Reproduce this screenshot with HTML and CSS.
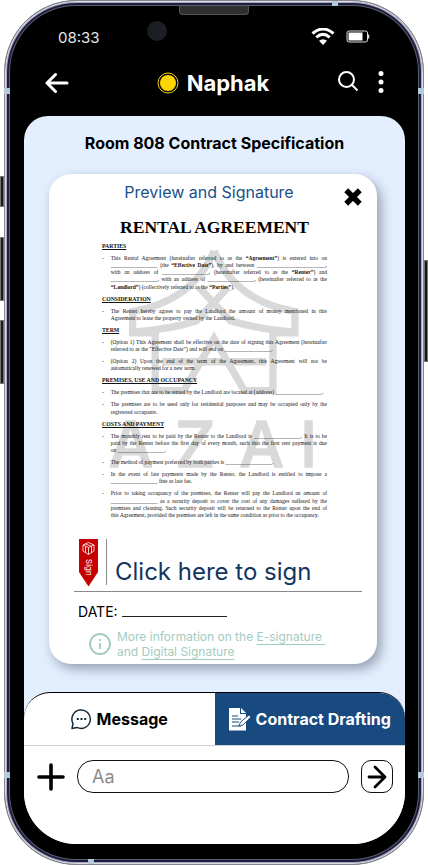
FILE: index.html
```html
<!DOCTYPE html>
<html lang="en">
<head>
<meta charset="utf-8">
<meta name="viewport" content="width=device-width, initial-scale=1">
<title>Naphak – Contract</title>
<link rel="stylesheet" href="styles.css">
</head>
<body>
<div class="phone">
  <i class="side side-mute"></i><i class="side side-up"></i><i class="side side-down"></i><i class="side side-power"></i>
  <i class="band band-left"></i><i class="band band-right"></i><i class="band band-left band-low"></i><i class="band band-right band-low"></i>
  <i class="band-h band-top"></i><i class="band-h band-bottom"></i>
  <i class="speaker"></i><i class="camera"></i>
  <div class="status">
    <span class="time">08:33</span>
    <svg class="wifi" width="24" height="18" viewBox="0 0 24 18" fill="none" stroke="#fff" stroke-width="3"><path d="M1.5 5.500Q12-3.500 22.500 5.500M5.300 9.300Q12 3.500 18.700 9.300"/><path d="M8 12.800Q12 9.800 16 12.800L12 17Z" fill="#fff" stroke="none"/></svg>
    <svg width="24" height="14" viewBox="0 0 24 14"><rect x="1" y="1" width="20.500" height="11" rx="2" fill="none" stroke="#ddd"/><rect x="2.500" y="2.500" width="14" height="8" fill="#fff"/><path d="M22.500 4.500v4" stroke="#ddd" stroke-width="1.500"/></svg>
  </div>
  <header class="top">
    <button class="icon" aria-label="Back"><svg width="24" height="22" viewBox="0 0 24 22" fill="none" stroke="#fff" stroke-width="3" stroke-linecap="round" stroke-linejoin="round"><path d="M22 11H2M10.500 2.500 2 11l8.500 8.500"/></svg></button>
    <div class="who"><svg width="22" height="22" viewBox="0 0 22 22"><circle cx="11" cy="11" r="8" fill="#ffd500"/><circle cx="11" cy="11" r="10" fill="none" stroke="#f5cf10"/></svg><h1>Naphak</h1></div>
    <button class="icon" aria-label="Search"><svg width="22" height="24" viewBox="0 0 22 24" fill="none" stroke="#fff" stroke-width="2"><circle cx="9.500" cy="8.500" r="7.500"/><path d="m15 14 5.500 5.500"/></svg></button>
    <button class="icon" aria-label="More"><svg width="6" height="24" viewBox="0 0 6 24" fill="#fff"><circle cx="3" cy="2.500" r="2.500"/><circle cx="3" cy="11" r="2.500"/><circle cx="3" cy="19.500" r="2.500"/></svg></button>
  </header>
  <main class="screen">
    <h2>Room 808 Contract Specification</h2>
    <section class="card">
      <div class="card-head">
        <h3>Preview and Signature</h3>
        <button class="icon close" aria-label="Close"><svg width="18" height="18" viewBox="0 0 18 18" stroke="#000" stroke-width="5.500"><path d="m2.200 2.200 13.600 13.600M15.800 2.200 2.200 15.800"/></svg></button>
      </div>
      <div class="paper">
        <svg class="mark" viewBox="0 0 690 705" fill="none" stroke="#d9d9d9" stroke-width="22">
          <path d="M343 30Q280 180 98 212V276H166V450H252L343 293L434 450H520V276H586V212Q405 180 343 30"/>
          <path d="M98 274Q220 264 290 240L385 140M298 140L392 240Q470 264 586 274M187 363H500"/>
          <g class="mark-name"><text x="93" y="678">A</text><text x="286" y="678">Z</text><text x="486" y="678">A</text><text x="627" y="678">I</text></g>
        </svg>
        <article class="doc">
          <h4>RENTAL AGREEMENT</h4>
          <h5>PARTIES</h5>
          <p>This Rental Agreement (hereinafter referred to as the <b>“Agreement”</b>) is entered into on _________________ (the <b>“Effective Date”</b>), by and between _________________________, with an address of _________________, (hereinafter referred to as the <b>“Renter”</b>) and _________________, with an address of _________________, (hereinafter referred to as the <b>“Landlord”</b>) (collectively referred to as the <b>“Parties”</b>).</p>
          <h5>CONSIDERATION</h5>
          <p>The Renter hereby agrees to pay the Landlord the amount of money mentioned in this Agreement&nbsp;to lease the property owned by the Landlord.</p>
          <h5>TERM</h5>
          <p>(Option 1) This Agreement shall be effective on the date of signing this Agreement (hereinafter referred to as the “Effective Date”) and will end on _________________.</p>
          <p>(Option 2) Upon the end of the term of the Agreement, this Agreement will not be automatically&nbsp;renewed for a new term.</p>
          <h5>PREMISES, USE AND OCCUPANCY</h5>
          <p>The premises that are to be rented by the Landlord are located at (address) _________________.</p>
          <p>The premises are to be used only for residential purposes and may be occupied only by the registered occupants.</p>
          <h5>COSTS AND PAYMENT</h5>
          <p>The monthly rent to be paid by the Renter to the Landlord is _________________. It is to be paid&nbsp;by the Renter before the first day of every month, such that the first rent payment is due on&nbsp;_________________.</p>
          <p>The method of payment preferred by both parties is _________________.</p>
          <p>In the event of late payments made by the Renter, the Landlord is entitled to impose a _________________ fine as late fee.</p>
          <p>Prior to taking occupancy of the premises, the Renter will pay the Landlord an amount of _________________ as a security deposit to cover the cost of any damages suffered by the premises and cleaning. Such security deposit will be returned to the Renter upon the end of this&nbsp;Agreement, provided the premises are left in the same condition as prior to the occupancy.</p>
        </article>
      </div>
      <button class="sign">
        <svg width="20" height="48" viewBox="0 0 20 48"><path d="M0 0h19v33L9.500 47.500 0 33Z" fill="#c60000"/><path d="m4 6 5.500-2.500L15 6v6l-5.500 3.500L4 12ZM4 6l5.500 2.500L15 6M9.500 8.500v7M6.500 7.500v6M12.500 7.500v6M6.500 5l5.500 2" fill="none" stroke="#fff" stroke-width=".8"/><text class="tag" transform="translate(7 20) rotate(90)">Sign</text></svg>
        <span>Click here to sign</span>
      </button>
      <label class="date">DATE: <input type="text"></label>
      <div class="info">
        <svg width="22" height="22" viewBox="0 0 22 22" fill="none" stroke="#a3cbbf" stroke-width="1.800"><circle cx="11" cy="11" r="10"/><path d="M11 10v6M11 6v2"/></svg>
        <p>More information on the <a href="#esign">E-signature&nbsp;</a><br>and <a href="#digital">Digital Signature</a></p>
      </div>
    </section>
    <footer class="dock">
      <nav class="tabs">
        <button class="tab"><svg width="21" height="21" viewBox="0 0 21 21" fill="none" stroke="#142c3d" stroke-width="1.500"><path d="M1 19.500 2 14.500A9.200 9.200 0 1 1 6 18.400Z" stroke-linejoin="round"/><path d="M5.800 10h2M9.500 10h2M13.200 10h2" stroke-width="1.800"/></svg>Message</button>
        <button class="tab active"><svg width="22" height="23" viewBox="0 0 22 23"><path d="M0 0h11v6h6v16.500H0Z" fill="#fff"/><path d="M12 0l5 5h-5Z" fill="#fff"/><path d="M3 8h6M3 11h9M3 14h7M3 18h9" stroke="#184a80" stroke-width="1.200"/><path d="m10 18 1.500-4L20 7l2 2-8 8Z" fill="#fff" stroke="#184a80" stroke-width=".9"/></svg>Contract Drafting</button>
      </nav>
      <form class="compose">
        <button type="button" class="icon" aria-label="Add"><svg width="28" height="28" viewBox="0 0 28 28" stroke="#000" stroke-width="3.600" stroke-linecap="round"><path d="M14 2v24M2 14h24"/></svg></button>
        <input type="text" aria-label="Message" placeholder="Aa">
        <button type="button" class="icon send" aria-label="Send"><svg width="20" height="24" viewBox="0 0 20 24" fill="none" stroke="#000" stroke-width="2.800" stroke-linecap="round" stroke-linejoin="round"><path d="M2 12h16M8 2l10 10L8 22"/></svg></button>
      </form>
    </footer>
  </main>
</div>
</body>
</html>
```
FILE: styles.css
```css
* { box-sizing: border-box; }
body { margin: 0; background: #fff; font-family: Inter, "Liberation Sans", sans-serif; color: #000; }
h1, h2, h3, h4, h5, p { margin: 0; }
button, input { font: inherit; color: inherit; }
button { border: 0; background: none; padding: 0; cursor: pointer; }
svg { display: block; flex: none; }
.icon { display: flex; align-items: center; justify-content: center; }

.phone {
  position: relative;
  margin: 0 4px;
  padding: 19px 18px 20px 19px;
  border: 1px solid #85858f;
  border-radius: 72px;
  background: #000;
  box-shadow: inset 0 0 0 1px #dcdce4, inset 0 0 0 2px #a9a9b5, inset 0 0 0 4px #1f1d45, inset 0 0 0 5px #56606b;
}
.side { position: absolute; width: 4px; background: #15191b; border: 1px solid #777; left: -5px; }
.side-mute { top: 175px; height: 31px; }
.side-up { top: 236px; height: 64px; }
.side-down { top: 319px; height: 64px; }
.side-power { top: 259px; height: 102px; left: auto; right: -5px; }
.band { position: absolute; top: 87px; width: 6px; height: 6px; background: #b3c9dc; }
.band-left { left: -1px; }
.band-right { right: -1px; }
.band-low { top: auto; bottom: 86px; }
.band-h { position: absolute; width: 6px; height: 5px; background: #b3c9dc; }
.band-top { top: 0; right: 85px; }
.band-bottom { bottom: 0; left: 83px; }
.speaker { position: absolute; top: 5px; left: 174px; right: 174px; height: 9px; border-radius: 0 0 4px 4px; background: #303030; border: 1px solid #555; border-top: 0; }
.camera { position: absolute; top: 20px; left: 142px; width: 20px; height: 20px; border-radius: 50%; background: #1b1f24; }

.status { display: flex; align-items: center; height: 34px; padding: 0 35px 0 34px; color: #e6e6e6; font-size: 15px; }
.time { flex: 1; }
.wifi { margin-right: 11px; }
.top { display: flex; align-items: center; height: 62px; padding: 0 21px 5px; color: #fff; }
.who { flex: 1; display: flex; justify-content: center; align-items: center; gap: 8px; padding-left: 20px; }
.top h1 { font-size: 22px; line-height: 28px; font-weight: 700; }
.top .icon + .icon { margin-left: 19px; }

.screen { display: flex; flex-direction: column; background: #e3efff; border-radius: 24px 24px 52px 52px; overflow: hidden; }
.screen h2 { margin: 16px 0 20px; text-align: center; font-size: 16px; line-height: 22px; font-weight: 700; }
.card { margin: 0 28px 28px 25px; padding: 7px 15px 5px 25px; border-radius: 22px; background: #fff; box-shadow: 4px 5px 12px rgba(30, 40, 60, .4); }
.card-head { display: flex; align-items: flex-start; }
.card-head h3 { flex: 1; text-align: center; font-weight: 400; font-size: 16px; line-height: 22px; color: #20508a; }
.close { margin-top: 7px; height: 18px; }

.paper { position: relative; margin: 11px 35px 0 28px; }
.mark { position: absolute; top: 24px; left: -2px; width: 102%; }
.mark-name { font: 500 190px Inter, sans-serif; fill: #d9d9d9; stroke: #d9d9d9; stroke-width: 4px; text-anchor: middle; }
/* The page is set at its own scale and previewed at a quarter of it. */
.doc { position: relative; zoom: 25%; font-family: "Liberation Serif", serif; font-size: 22px; line-height: 29px; text-align: justify; color: #111; }
.doc h4 { margin: 0 -20px 22px; text-align: center; white-space: nowrap; font-size: 70px; line-height: 80px; color: #000; }
.doc h5 { margin-bottom: 19px; font-size: 23px; text-decoration: underline; }
.doc p { margin-bottom: 19px; padding-left: 35px; }
.doc p::before { content: "-"; float: left; margin-left: -35px; }

.sign { display: flex; width: 100%; align-items: flex-start; height: 53px; margin-top: 20px; padding-left: 5px; border-bottom: 1px solid #8a8a8a; text-align: left; }
.sign span { margin-left: 7px; padding: 15px 0 0 8px; border-left: 1px solid #8a8a8a; height: 46px; font-size: 24px; line-height: 36px; color: #14355f; }
.tag { font: 8px Inter, sans-serif; fill: #fff; }
.date { display: flex; gap: 4px; align-items: flex-start; margin: 9px 0 0 4px; font-size: 14px; line-height: 22px; }
.date input { width: 105px; height: 16px; padding: 0; border: 0; border-bottom: 1px solid #222; background: none; outline: 0; }
.info { display: flex; align-items: center; gap: 6px; margin: 6px 0 0 15px; color: #a3cbbf; font-size: 12px; line-height: 15px; white-space: nowrap; }
.info a { color: inherit; text-decoration: underline; text-underline-offset: 3px; }

.dock { background: #fff; border-radius: 26px 26px 0 0; }
.tabs { display: flex; height: 54px; border-top: 1px solid #000; border-radius: 26px 26px 0 0; overflow: hidden; border-bottom: 1px solid #ccd0d6; }
.tab { flex: 1; display: flex; align-items: center; justify-content: center; gap: 5px; font-weight: 700; font-size: 16px; white-space: nowrap; }
.active { background: #184a80; color: #fff; }
.compose { display: flex; align-items: center; gap: 12px; padding: 14px 12px 51px 13px; }
.compose input { flex: 1; min-width: 0; height: 33px; padding: 0 14px; border: 1px solid #111; border-radius: 16px; background: #fff; font-size: 18px; outline: 0; }
.compose input::placeholder { color: #8c8c8c; opacity: 1; }
.send { width: 32px; height: 33px; border: 1px solid #111; border-radius: 10px; }
```
